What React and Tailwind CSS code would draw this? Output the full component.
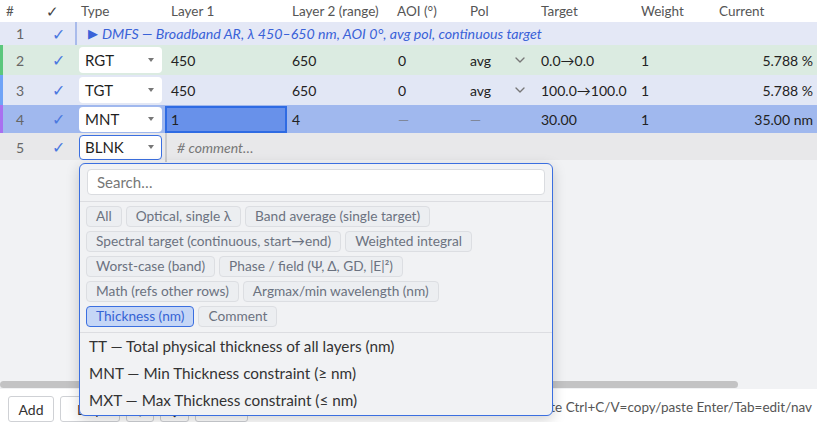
import React from 'react';
import { ChevronDown } from 'lucide-react';

const GRID = 'grid grid-cols-[40px_35px_90px_121px_105px_73px_71px_100px_78px_104px]';

const ROWS = [
  { n: 2, type: 'RGT', l1: '450', l2: '650', aoi: '0', pol: 'avg', target: '0.0→0.0', w: '1', cur: '5.788 %', bg: 'bg-[#dbebe1]', bar: 'border-[#5bc77c]', h: 'h-[30px]', chev: true },
  { n: 3, type: 'TGT', l1: '450', l2: '650', aoi: '0', pol: 'avg', target: '100.0→100.0', w: '1', cur: '5.788 %', bg: 'bg-[#e2e7f5]', bar: 'border-[#6fa3f7]', h: 'h-[30px]', chev: true },
  { n: 4, type: 'MNT', l1: '1', l2: '4', aoi: '—', pol: '—', target: '30.00', w: '1', cur: '35.00 nm', bg: 'bg-[#a0b8ee]', bar: 'border-[#a970f0]', h: 'h-[28px]', active: true },
];

const CHIP_ROWS = [
  ['All', 'Optical, single λ', 'Band average (single target)'],
  ['Spectral target (continuous, start→end)', 'Weighted integral'],
  ['Worst-case (band)', 'Phase / field (Ψ, Δ, GD, |E|²)'],
  ['Math (refs other rows)', 'Argmax/min wavelength (nm)'],
  ['Thickness (nm)', 'Comment'],
];

const OPTIONS = [
  'TT — Total physical thickness of all layers (nm)',
  'MNT — Min Thickness constraint (≥ nm)',
  'MXT — Max Thickness constraint (≤ nm)',
];

const Caret = () => (
  <svg width="6" height="4" viewBox="0 0 6 4"><path d="M0 0h6L3 4z" fill="#777" /></svg>
);

const TypeBox = ({ label, focused }) => (
  <div className={`ml-[4px] mr-[3px] my-[2px] flex items-center justify-between rounded-[4px] bg-white pl-[5px] pr-[7px] text-[15px] text-[#1f1f1f] border ${focused ? 'border-[#3b6fe0]' : 'border-transparent'}`}>
    <span>{label}</span>
    <Caret />
  </div>
);

const Check = () => <span className="text-[#4a78e0] text-[16px] leading-none">✓</span>;

const DataRow = ({ r }) => (
  <div className={`${GRID} ${r.h} ${r.bg} text-[14px] text-[#222]`}>
    <div className={`border-l-[3px] ${r.bar} flex items-center justify-center pr-[3px] text-[#666]`}>{r.n}</div>
    <div className="flex items-center justify-center pl-[1px]"><Check /></div>
    <TypeBox label={r.type} />
    {r.active ? (
      <div className="my-[1px] mr-[-1px] flex items-center border-2 border-[#2f6be3] bg-[#6891ea] pl-[4px]">{r.l1}</div>
    ) : (
      <div className="flex items-center pl-[6px]">{r.l1}</div>
    )}
    <div className="flex items-center pl-[6px]">{r.l2}</div>
    <div className={`flex items-center pl-[7px] ${r.active ? 'text-[#7f879a]' : ''}`}>{r.aoi}</div>
    <div className={`flex items-center justify-between pl-[6px] pr-[7px] ${r.active ? 'text-[#7f879a]' : ''}`}>
      <span>{r.pol}</span>
      {r.chev && <ChevronDown size={16} strokeWidth={2} className="text-[#777]" />}
    </div>
    <div className="flex items-center pl-[6px]">{r.target}</div>
    <div className="flex items-center pl-[6px]">{r.w}</div>
    <div className="flex items-center justify-end pr-[4px]">{r.cur}</div>
  </div>
);

export default function App() {
  return (
    <div className="relative flex h-[422px] w-[817px] flex-col overflow-hidden bg-[#f1f2f4] font-['Lato',sans-serif]">
      {/* header */}
      <div className={`${GRID} h-[22px] bg-white text-[13.5px] text-[#555] shadow-[0_1px_1px_rgba(0,0,0,0.06)]`}>
        <div className="flex items-center pl-[6px]">#</div>
        <div className="flex items-center pl-[6px] text-[15px] text-[#444]">✓</div>
        <div className="flex items-center pl-[6px]">Type</div>
        <div className="flex items-center pl-[6px]">Layer 1</div>
        <div className="flex items-center pl-[6px]">Layer 2 (range)</div>
        <div className="flex items-center pl-[6px]">AOI (°)</div>
        <div className="flex items-center pl-[6px]">Pol</div>
        <div className="flex items-center pl-[6px]">Target</div>
        <div className="flex items-center pl-[6px]">Weight</div>
        <div className="flex items-center pl-[6px]">Current</div>
      </div>

      {/* section row */}
      <div className={`${GRID} h-[23px] bg-[#e4e8f6] text-[14.2px]`}>
        <div className="flex items-center justify-center text-[#666]">1</div>
        <div className="flex items-center justify-center pl-[1px]"><Check /></div>
        <div className="col-span-8 flex items-center border-l-2 border-[#a9bbeb] pl-[11px] italic text-[#3a62d8]">
          <span className="not-italic mr-[4px] text-[13px]">▶</span>
          DMFS — Broadband AR, λ 450–650 nm, AOI 0°, avg pol, continuous target
        </div>
      </div>

      {ROWS.map((r) => <DataRow key={r.n} r={r} />)}

      {/* blank row */}
      <div className={`${GRID} h-[27px] bg-[#e8e8ea] text-[14px]`}>
        <div className="flex items-center justify-center text-[#666]">5</div>
        <div className="flex items-center justify-center pl-[1px]"><Check /></div>
        <TypeBox label="BLNK" focused />
        <div className="col-span-7 flex items-center border-l-2 border-[#c9cacd] pl-[10px] italic text-[#777]"># comment…</div>
      </div>

      <div className="flex-1" />

      {/* horizontal scrollbar */}
      <div className="h-[9px] py-[1px]">
        <div className="h-[7px] w-[738px] rounded-full bg-[#c3c3c4]" />
      </div>

      {/* toolbar */}
      <div className="flex h-[33px] items-start gap-[6px] bg-white pl-[8px] pr-[5px] pt-[7px] text-[14px] text-[#333]">
        <button className="h-[26px] w-[46px] rounded-[3px] border border-[#cfd1d5] bg-white">Add</button>
        <button className="h-[26px] w-[60px] rounded-[3px] border border-[#cfd1d5] bg-white">Dup</button>
        <button className="h-[26px] w-[28px] rounded-[3px] border border-[#cfd1d5] bg-white">↑</button>
        <button className="h-[26px] w-[29px] rounded-[3px] border border-[#cfd1d5] bg-white">↓</button>
        <button className="h-[26px] w-[53px] rounded-[3px] border border-[#cfd1d5] bg-white">Del</button>
        <span className="ml-auto self-center pb-[3px] text-[13.5px] text-[#555]">Del=delete Ctrl+C/V=copy/paste Enter/Tab=edit/nav</span>
      </div>

      {/* type picker popover */}
      <div className="absolute left-[79px] top-[163px] flex h-[253px] w-[474px] flex-col rounded-[6px] border border-[#3b6fe0] bg-[#f1f2f4] shadow-[0_4px_14px_rgba(0,0,0,0.18)]">
        <div className="border-b border-[#dcdde1] px-[7px] pb-[6px] pt-[5px]">
          <div className="flex h-[26px] items-center rounded-[4px] border border-[#dadce0] bg-white pl-[9px] text-[15px] text-[#777]">Search…</div>
        </div>
        <div className="flex flex-col gap-[4px] border-b border-[#dcdde1] px-[6px] pb-[5px] pt-[4px]">
          {CHIP_ROWS.map((row, i) => (
            <div key={i} className="flex gap-[4px]">
              {row.map((c) => {
                const sel = c === 'Thickness (nm)';
                return (
                  <span
                    key={c}
                    className={`flex h-[21px] items-center rounded-[4px] border px-[9px] text-[13.7px] ${sel ? 'border-[#3b6fe0] bg-[#c5d6f6] text-[#3563d4]' : 'border-[#dcdee2] bg-[#eceef1] text-[#6b7280]'}`}
                  >
                    {c}
                  </span>
                );
              })}
            </div>
          ))}
        </div>
        <div className="flex flex-col">
          {OPTIONS.map((o) => (
            <div key={o} className="flex h-[27px] items-center px-[9px] text-[15.3px] text-[#333]">{o}</div>
          ))}
        </div>
      </div>
    </div>
  );
}
